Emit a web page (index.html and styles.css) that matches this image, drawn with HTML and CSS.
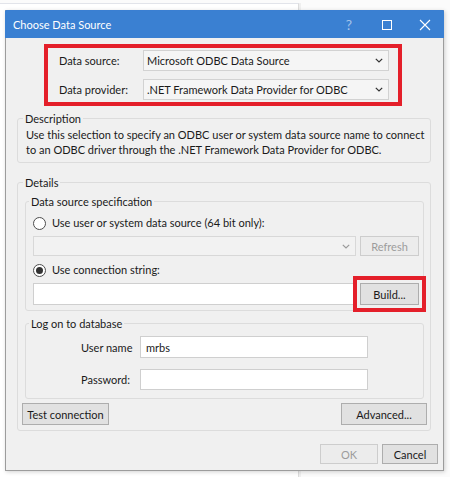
FILE: index.html
```html
<!DOCTYPE html>
<html>
<head>
<meta charset="utf-8">
<link rel="stylesheet" href="styles.css">
</head>
<body>
<div class="backwin"></div>
<div class="dialog">
  <div class="titlebar">
    <span class="title">Choose Data Source</span>
    <div class="caption-btns">
      <span class="cbtn help">?</span>
      <span class="cbtn"><svg width="12" height="12" viewBox="0 0 12 12"><rect x="1.5" y="1.5" width="9" height="9" fill="none" stroke="#fff" stroke-width="1"/></svg></span>
      <span class="cbtn"><svg width="12" height="12" viewBox="0 0 12 12"><path d="M1 1 L11 11 M11 1 L1 11" stroke="#fff" stroke-width="1.1" fill="none"/></svg></span>
    </div>
  </div>
  <div class="body">
    <div class="highlight">
      <div class="row">
        <span class="lbl">Data source:</span>
        <div class="combo"><span class="val">Microsoft ODBC Data Source</span><svg class="chev" width="8" height="5" viewBox="0 0 8 5"><path d="M0.8 0.8 L4 4 L7.2 0.8" stroke="#333" stroke-width="1.2" fill="none"/></svg></div>
      </div>
      <div class="row">
        <span class="lbl">Data provider:</span>
        <div class="combo"><span class="val">.NET Framework Data Provider for ODBC</span><svg class="chev" width="8" height="5" viewBox="0 0 8 5"><path d="M0.8 0.8 L4 4 L7.2 0.8" stroke="#333" stroke-width="1.2" fill="none"/></svg></div>
      </div>
    </div>

    <fieldset class="group desc">
      <legend>Description</legend>
      <p>Use this selection to specify an ODBC user or system data source name to connect<br>to an ODBC driver through the .NET Framework Data Provider for ODBC.</p>
    </fieldset>

    <fieldset class="group details">
      <legend>Details</legend>
      <fieldset class="group inner spec">
        <legend>Data source specification</legend>
        <div class="radio-row"><span class="radio"></span><span>Use user or system data source (64 bit only):</span></div>
        <div class="ctl-row first">
          <div class="combo dis"><span class="val"></span><svg class="chev" width="8" height="5" viewBox="0 0 8 5"><path d="M0.8 0.8 L4 4 L7.2 0.8" stroke="#9a9a9a" stroke-width="1.2" fill="none"/></svg></div>
          <span class="btn btn-dis refresh">Refresh</span>
        </div>
        <div class="radio-row"><span class="radio on"></span><span>Use connection string:</span></div>
        <div class="ctl-row">
          <div class="textbox conn"></div>
          <span class="btn build">Build...</span>
        </div>
      </fieldset>
      <fieldset class="group inner logon">
        <legend>Log on to database</legend>
        <div class="field"><span class="flbl">User name</span><div class="textbox">mrbs</div></div>
        <div class="field pw"><span class="flbl">Password:</span><div class="textbox"></div></div>
      </fieldset>
      <div class="btn-row">
        <span class="btn test">Test connection</span>
        <span class="btn adv">Advanced...</span>
      </div>
    </fieldset>

    <div class="footer">
      <span class="btn btn-dis ok">OK</span>
      <span class="btn cancel">Cancel</span>
    </div>
  </div>
</div>
</body>
</html>
```

FILE: styles.css
```css
* { box-sizing: border-box; }
html, body { margin: 0; padding: 0; }
body {
  width: 450px;
  height: 477px;
  background: #fbfbfb;
  font-family: Lato, "Noto Sans", sans-serif;
  font-size: 11px;
  color: #1a1a1a;
  position: relative;
  overflow: hidden;
}

.backwin {
  position: absolute;
  left: -2px;
  top: 3px;
  width: 301px;
  height: 480px;
  background: #fff;
  border-top: 1px solid #e2e4ea;
  border-right: 1px solid #dcdcdc;
  box-shadow: 2px 0 0 #efefef;
}

.dialog {
  position: absolute;
  left: 5px;
  top: 10px;
  width: 439px;
  height: 461px;
  background: #f0f0f0;
  border: 1px solid #9c9c9c;
  border-top-color: #3a7fd2;
  box-shadow: 1px 1px 4px rgba(0,0,0,0.18);
}

.titlebar {
  height: 27px;
  background: #3a80d2;
  display: flex;
  align-items: center;
  color: #fff;
  margin: 0 -1px 0 -1px;
  padding-left: 8px;
}
.title { flex: 1; font-size: 11px; line-height: 27px; }
.caption-btns { display: flex; height: 27px; }
.cbtn {
  width: 38px;
  display: flex;
  align-items: center;
  justify-content: center;
}
.help { color: rgba(255,255,255,0.55); font-size: 14px; }

.highlight {
  margin: 6px 0 0 38px;
  width: 358px;
  height: 62px;
  border: 4px solid #e41f2a;
  padding: 2px 9px 0 11px;
  display: flex;
  flex-direction: column;
  gap: 8px;
}
.row { display: flex; align-items: center; height: 21px; }
.lbl { width: 84px; }

.combo {
  width: 246px;
  height: 21px;
  background: #f5f5f5;
  border: 1px solid #d2d2d2;
  display: flex;
  align-items: center;
  padding: 0 5px 0 3px;
}
.combo .val { flex: 1; white-space: nowrap; overflow: hidden; }
.chev { flex: none; }

.group {
  margin: 0;
  border: 1px solid #dcdcdc;
  border-radius: 3px;
  min-width: 0;
}
.group legend {
  padding: 0 2px;
  line-height: 15px;
  height: 15px;
}

.desc {
  margin: 5px 0 0 11px;
  width: 414px;
  padding: 1px 8px 5px 8px;
}
.desc legend { margin-left: -3px; }
.desc p { margin: 0; line-height: 15px; white-space: nowrap; }

.details {
  margin: 12px 0 0 11px;
  width: 414px;
  padding: 4px 6px 5px 7px;
}
.details legend { margin-left: -2px; }

.inner { padding: 6px 4px 5px 7px; }
.inner legend { margin-left: -4px; }

.radio-row {
  display: flex;
  align-items: center;
  height: 16px;
  line-height: 16px;
}
.radio {
  width: 13px;
  height: 13px;
  border-radius: 50%;
  border: 1px solid #4d4d4d;
  background: #fff;
  margin-right: 6px;
  position: relative;
  flex: none;
}
.radio.on::after {
  content: "";
  position: absolute;
  left: 2px;
  top: 2px;
  width: 7px;
  height: 7px;
  border-radius: 50%;
  background: #333;
}

.ctl-row {
  display: flex;
  gap: 4px;
  margin: 5px 0 5px 0;
}
.ctl-row.first { margin: 5px 0 6px 0; }
.combo.dis {
  width: 323px;
  height: 20px;
  background: #f2f2f2;
  border-color: #d8d8d8;
}

.btn {
  display: inline-flex;
  align-items: center;
  justify-content: center;
  background: #e1e1e1;
  border: 1px solid #adadad;
  height: 22px;
  white-space: nowrap;
}
.btn-dis {
  background: #ececec;
  border-color: #cdcdcd;
  color: #9c9c9c;
}
.refresh { width: 59px; height: 20px; }

.textbox {
  background: #fff;
  border: 1px solid #cfcfcf;
  height: 22px;
  display: flex;
  align-items: center;
  padding-left: 5px;
}
.textbox.conn { width: 323px; }
.build {
  width: 59px;
  outline: 4px solid #e41f2a;
  outline-offset: 3px;
}
.spec .ctl-row:last-child { margin-bottom: 0; }

.logon {
  margin-top: 5px;
  padding: 5px 4px 8px 7px;
}
.field { display: flex; align-items: center; }
.field.pw { margin-top: 11px; }
.flbl { width: 59px; margin-left: 48px; white-space: nowrap; overflow: hidden; }
.field .textbox { width: 228px; height: 22px; }
.field.pw .textbox { height: 21px; }

.btn-row {
  display: flex;
  justify-content: space-between;
  margin: 4px -3px 0 -3px;
}
.test { width: 87px; }
.adv { width: 86px; }

.footer {
  display: flex;
  justify-content: flex-end;
  gap: 4px;
  margin-top: 13px;
  padding-right: 5px;
}
.ok { width: 58px; height: 20px; }
.cancel { width: 56px; height: 20px; }
```
